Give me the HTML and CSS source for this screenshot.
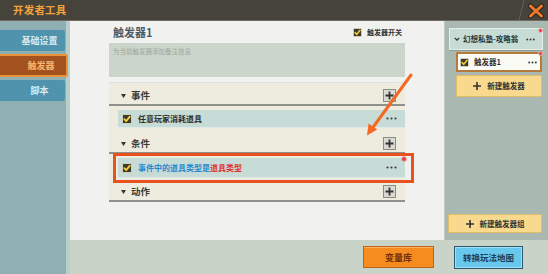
FILE: index.html
```html
<!DOCTYPE html>
<html lang="zh-CN">
<head>
<meta charset="utf-8">
<title>开发者工具</title>
<link rel="stylesheet" href="styles.css">
</head>
<body>
<div class="app">
  <header class="topbar">
    <div class="app-title">开发者工具</div>
    <div class="close">
      <svg width="30" height="20" viewBox="0 0 30 20"><path d="M6 0 L1 20" stroke="#66625a" stroke-width="1"/><path d="M12.5 6 L23.5 16 M23.5 6 L12.5 16" stroke="#2a2620" stroke-width="5" stroke-linecap="round"/><path d="M12.5 6 L23.5 16 M23.5 6 L12.5 16" stroke="#f07a2c" stroke-width="3" stroke-linecap="round"/></svg>
    </div>
  </header>

  <nav class="sidebar">
    <div class="nav-item">基础设置</div>
    <div class="nav-item active">触发器</div>
    <div class="nav-item">脚本</div>
  </nav>

  <main class="editor">
    <div class="editor-head">
      <h1 class="trigger-name">触发器1</h1>
      <div class="toggle">
        <svg class="cb" viewBox="0 0 10 10"><rect x=".5" y=".5" width="9" height="9" rx="1.2" fill="#3f3b2b" stroke="#e6e4d2" stroke-width=".8"/><path d="M2.3 5.1 4.2 7.1 7.8 2.6" fill="none" stroke="#f3d33b" stroke-width="1.7" stroke-linecap="round" stroke-linejoin="round"/></svg>
        <span>触发器开关</span>
      </div>
    </div>
    <div class="note">为当前触发器添加备注信息</div>

    <div class="sections">
      <div class="sec-head">
        <svg class="caret" width="5" height="4" viewBox="0 0 5 4"><path d="M0 0h5L2.5 4z" fill="#333"/></svg>
        <span>事件</span>
        <span class="add"><svg width="9" height="9" viewBox="0 0 9 9"><path d="M4.5 .5v8M.5 4.5h8" stroke="#333" stroke-width="1.8"/></svg></span>
      </div>
      <div class="rule r1">
        <svg class="cb" viewBox="0 0 10 10"><rect x=".5" y=".5" width="9" height="9" rx="1.2" fill="#3f3b2b" stroke="#e6e4d2" stroke-width=".8"/><path d="M2.3 5.1 4.2 7.1 7.8 2.6" fill="none" stroke="#f3d33b" stroke-width="1.7" stroke-linecap="round" stroke-linejoin="round"/></svg>
        <span>任意玩家消耗道具</span>
        <svg class="dots" width="11" height="3" viewBox="0 0 11 3"><circle cx="1.5" cy="1.5" r="1.1"/><circle cx="5.5" cy="1.5" r="1.1"/><circle cx="9.5" cy="1.5" r="1.1"/></svg>
      </div>

      <div class="sec-head h2">
        <svg class="caret" width="5" height="4" viewBox="0 0 5 4"><path d="M0 0h5L2.5 4z" fill="#333"/></svg>
        <span>条件</span>
        <span class="add"><svg width="9" height="9" viewBox="0 0 9 9"><path d="M4.5 .5v8M.5 4.5h8" stroke="#333" stroke-width="1.8"/></svg></span>
      </div>
      <div class="rule r2">
        <svg class="cb" viewBox="0 0 10 10"><rect x=".5" y=".5" width="9" height="9" rx="1.2" fill="#3f3b2b" stroke="#e6e4d2" stroke-width=".8"/><path d="M2.3 5.1 4.2 7.1 7.8 2.6" fill="none" stroke="#f3d33b" stroke-width="1.7" stroke-linecap="round" stroke-linejoin="round"/></svg>
        <span><span class="t-blue">事件中的道具类型是</span><span class="t-red">道具类型</span></span>
        <svg class="dots" width="11" height="3" viewBox="0 0 11 3"><circle cx="1.5" cy="1.5" r="1.1"/><circle cx="5.5" cy="1.5" r="1.1"/><circle cx="9.5" cy="1.5" r="1.1"/></svg>
        <span class="badge"></span>
      </div>

      <div class="sec-head h3">
        <svg class="caret" width="5" height="4" viewBox="0 0 5 4"><path d="M0 0h5L2.5 4z" fill="#333"/></svg>
        <span>动作</span>
        <span class="add"><svg width="9" height="9" viewBox="0 0 9 9"><path d="M4.5 .5v8M.5 4.5h8" stroke="#333" stroke-width="1.8"/></svg></span>
      </div>

      <div class="highlight"></div>
    </div>
  </main>

  <aside class="tree">
    <div class="group">
      <svg width="6" height="4" viewBox="0 0 6 4"><path d="M.8.8 3 3.2 5.2.8" stroke="#333" fill="none" stroke-width="1.2"/></svg>
      <span class="group-name">幻想私塾-攻略翁</span>
      <svg class="dots" width="9" height="3" viewBox="0 0 9 3"><circle cx="1.2" cy="1.5" r="1"/><circle cx="4.5" cy="1.5" r="1"/><circle cx="7.8" cy="1.5" r="1"/></svg>
      <span class="badge"></span>
    </div>
    <div class="node">
      <svg class="cb" viewBox="0 0 10 10"><rect x=".5" y=".5" width="9" height="9" rx="1.2" fill="#3f3b2b" stroke="#e6e4d2" stroke-width=".8"/><path d="M2.3 5.1 4.2 7.1 7.8 2.6" fill="none" stroke="#f3d33b" stroke-width="1.7" stroke-linecap="round" stroke-linejoin="round"/></svg>
      <span class="node-name">触发器1</span>
      <svg class="dots" width="9" height="3" viewBox="0 0 9 3"><circle cx="1.2" cy="1.5" r="1"/><circle cx="4.5" cy="1.5" r="1"/><circle cx="7.8" cy="1.5" r="1"/></svg>
      <span class="badge"></span>
    </div>
    <div class="new-node">
      <svg width="8" height="8" viewBox="0 0 8 8"><path d="M4 0v8M0 4h8" stroke="#333" stroke-width="1.6"/></svg>
      <span>新建触发器</span>
    </div>
    <div class="new-group">
      <svg width="8" height="8" viewBox="0 0 8 8"><path d="M4 0v8M0 4h8" stroke="#333" stroke-width="1.6"/></svg>
      <span>新建触发器组</span>
    </div>
  </aside>

  <footer class="bottombar">
    <div class="btn btn-var">变量库</div>
    <div class="btn btn-convert">转换玩法地图</div>
  </footer>

  <svg class="annot-arrow" width="548" height="274" viewBox="0 0 548 274">
    <path d="M411 75 L372.5 128" stroke="#f26a24" stroke-width="3" stroke-linecap="round"/>
    <path d="M367 135.5 L377.2 129.6 L368.6 123.4 Z" fill="#f26a24"/>
  </svg>
</div>
</body>
</html>
```

FILE: styles.css
```css
* { box-sizing: border-box; margin: 0; padding: 0; }

body {
  width: 548px;
  height: 274px;
  overflow: hidden;
  background: #c9d3c7;
  font-family: "Noto Sans CJK SC", "Noto Sans", sans-serif;
}

.app {
  position: relative;
  width: 548px;
  height: 274px;
  display: grid;
  grid-template-columns: 70px 374px 104px;
  grid-template-rows: 21px 219px 34px;
}

/* top bar */
.topbar {
  grid-column: 1 / -1;
  background: #46433b;
  border-bottom: 1px solid #6e6a60;
  display: flex;
  align-items: center;
  justify-content: space-between;
  padding-left: 13px;
}
.app-title {
  color: #f2a23c;
  font-size: 10.5px;
  font-weight: 700;
  line-height: 1;
  letter-spacing: 0.2px;
}
.close { display: flex; width: 30px; height: 20px; }

/* sidebar */
.sidebar {
  grid-row: 2 / 4;
  background: #8fb0b2;
  border-right: 4px solid #b7cecb;
  padding-top: 9px;
  display: flex;
  flex-direction: column;
  gap: 4px;
}
.nav-item {
  width: 65px;
  height: 21px;
  background: #4f93ad;
  color: #d7ebf1;
  font-size: 9px;
  font-weight: 700;
  line-height: 1;
  display: flex;
  align-items: center;
  justify-content: center;
  padding-left: 14px;
  border-radius: 0 2px 2px 0;
}
.nav-item.active {
  width: 68px;
  height: 23px;
  margin: -1px 0;
  background: #a3521f;
  border: 2px solid #e9933b;
  border-left: none;
  color: #f7b769;
  padding-left: 16px;
}

/* editor */
.editor {
  background: #f1f1f0;
  padding: 3px 39px 0 39px;
}
.editor-head {
  height: 16px;
  display: flex;
  align-items: center;
  justify-content: space-between;
  padding: 0 3px 0 4px;
}
.trigger-name {
  font-size: 11px;
  font-weight: 700;
  color: #4b5a66;
  line-height: 16px;
}
.toggle {
  display: flex;
  align-items: center;
  gap: 5px;
  font-size: 7px;
  font-weight: 700;
  color: #333;
  line-height: 1;
}
.cb { width: 10px; height: 10px; flex: none; }
.toggle .cb { width: 9px; height: 9px; }

.note {
  margin-top: 3px;
  height: 34px;
  background: #cbd5cb;
  color: #9ea79e;
  font-size: 6.5px;
  line-height: 8px;
  padding: 4px 4px;
}

.sections {
  position: relative;
  margin-top: 5px;
  border-top: 1px solid #dce3e6;
  background: #edecdf;
  padding-top: 2px;
}
.sec-head {
  height: 21px;
  border-bottom: 2px solid #8e928b;
  display: flex;
  align-items: center;
  padding: 2px 9px 0 12px;
  font-size: 9.5px;
  font-weight: 700;
  color: #3b3b36;
  line-height: 1;
  gap: 5px;
}
.sec-head.h2 { margin-top: 5px; }
.sec-head.h3 { margin-top: 3px; }
.caret { flex: none; }
.add {
  margin-left: auto;
  width: 13px;
  height: 13px;
  background: #d9dad2;
  border: 1px solid #8b8c86;
  display: flex;
  align-items: center;
  justify-content: center;
}

.rule {
  position: relative;
  margin-left: 9px;
  background: #c7dcd6;
  border-bottom: 1px solid #dfe9e5;
  display: flex;
  align-items: center;
  gap: 6px;
  padding: 0 8px 0 4px;
  font-size: 8px;
  font-weight: 700;
  color: #2e2e2e;
  line-height: 1;
}
.rule.r1 { margin-top: 4px; height: 18px; }
.rule.r2 { margin-top: 4px; height: 20px; }
.t-blue { color: #2a88cf; }
.t-red { color: #e2322f; }
.dots { margin-left: auto; fill: #3a3a3a; flex: none; }

.badge {
  position: absolute;
  top: -2px;
  right: -2px;
  width: 6px;
  height: 6px;
  border-radius: 50%;
  background: #e0414b;
  border: 1px solid #f2b3b3;
}

.highlight {
  position: absolute;
  top: 70px;
  left: 4px;
  width: 301px;
  height: 30px;
  border: 3px solid #e8521f;
}

/* tree panel */
.tree {
  background: #a9b9b1;
  border-left: 1px solid #c0ccc6;
  padding: 7px 5px 7px 5px;
  display: flex;
  flex-direction: column;
}
.group {
  position: relative;
  height: 22px;
  margin-left: -1px;
  background: #c6dcd4;
  border: 1px solid #e7efeb;
  box-shadow: 0 1px 0 #8f9c96;
  display: flex;
  align-items: center;
  gap: 3px;
  padding: 0 7px 0 4px;
  font-size: 7.5px;
  font-weight: 700;
  color: #2c3838;
  line-height: 1;
}
.group .badge { top: -1px; right: -1px; width: 5px; height: 5px; }
.node {
  position: relative;
  margin: 2px 1px 0 6px;
  height: 20px;
  background: #fbfbf6;
  border: 2px solid #b67a3b;
  display: flex;
  align-items: center;
  gap: 5px;
  padding: 0 3px 0 2px;
  font-size: 7.5px;
  font-weight: 700;
  color: #333;
  line-height: 1;
}
.node .cb { width: 9px; height: 9px; }
.node .badge { top: -3px; right: -3px; width: 5px; height: 5px; }
.new-node, .new-group {
  background: #f8d98e;
  border: 1px solid #e1bd69;
  display: flex;
  align-items: center;
  justify-content: center;
  gap: 6px;
  font-size: 7.5px;
  font-weight: 700;
  color: #333;
  line-height: 1;
}
.new-node { margin: 3px 1px 0 6px; height: 22px; }
.new-group { margin: auto 1px 0 -2px; height: 19px; }

/* bottom bar */
.bottombar {
  grid-column: 2 / -1;
  background: #c9d3c7;
  display: flex;
  align-items: center;
  justify-content: flex-end;
  gap: 20px;
  padding-right: 25px;
}
.btn {
  display: flex;
  align-items: center;
  justify-content: center;
  font-weight: 700;
  line-height: 1;
}
.btn-var {
  width: 71px;
  height: 22px;
  background: #f68b20;
  border: 1px solid #b8651a;
  box-shadow: inset 0 1px 0 #fbb060;
  color: #6f3208;
  font-size: 9px;
}
.btn-convert {
  width: 69px;
  height: 23px;
  background: #67c7ec;
  border: 1.5px solid #2d5870;
  box-shadow: inset 0 0 0 1px #9fe0f7;
  color: #1e4060;
  font-size: 8.5px;
}

.annot-arrow {
  position: absolute;
  left: 0;
  top: 0;
  pointer-events: none;
}
```
